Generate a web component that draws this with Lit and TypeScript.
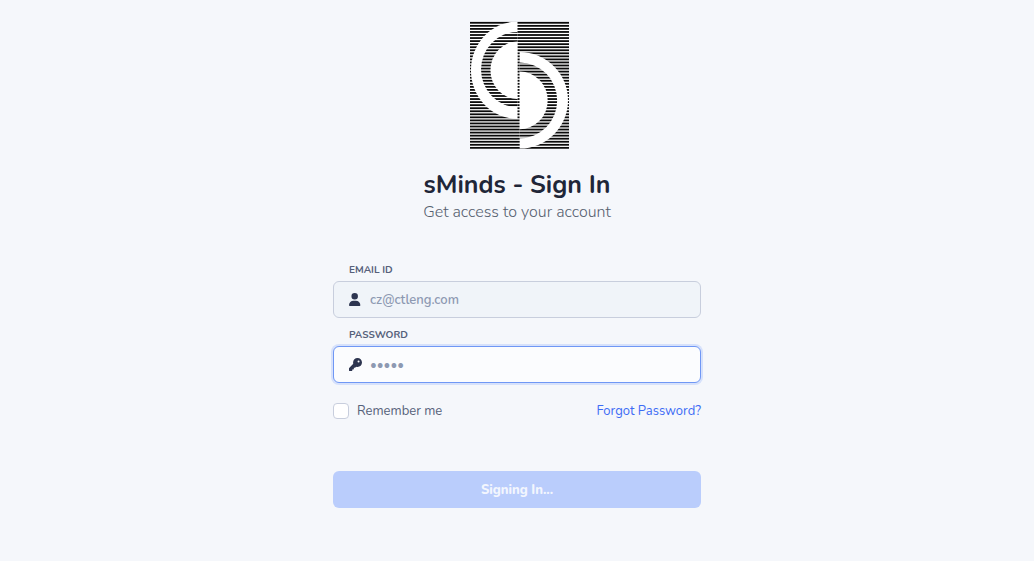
import { LitElement, html, css, svg } from "lit";
import { customElement } from "lit/decorators.js";

const STRIPES = Array.from({ length: 42 }, (_, i) => 0.9 + i * 3.05);

@customElement("brand-logo")
export class BrandLogo extends LitElement {
  static styles = css`
    :host { display: block; }
    svg { display: block; }
  `;

  render() {
    return html`
      <svg width="104" height="129" viewBox="-5 0 104 129" role="img" aria-label="sMinds">
        <defs>
          <mask id="m" maskUnits="userSpaceOnUse" x="0" y="0" width="99" height="129">
            <rect width="99" height="129" fill="#fff" />
            <path d="M47.500 .5A46.500 48.7 0 0 0 47.500 98Z" fill="#000" />
            <path d="M47.500 11A36.500 37.5 0 0 0 47.500 86Z" fill="#fff" />
            <path d="M47.500 20.5A27 28.7 0 0 0 47.500 78Z" fill="#000" />
            <path d="M49.700 31A48.3 48.3 0 0 1 49.700 127.6Z" fill="#000" />
            <path d="M49.700 41.5A37.500 37.9 0 0 1 49.700 117.3Z" fill="#fff" />
            <path d="M49.700 50.5A28 28.9 0 0 1 49.700 108.3Z" fill="#000" />
          </mask>
        </defs>
        <rect y="1" width="99" height="127" fill="#fff" />
        <g mask="url(#m)" fill="#0b0b0b">
          ${STRIPES.map((y) => svg`<rect x="0" y=${y} width="99" height="1.8" />`)}
        </g>
      </svg>
    `;
  }
}

@customElement("app-root")
export class AppRoot extends LitElement {
  static styles = css`
    :host {
      display: block;
      min-height: 100vh;
      box-sizing: border-box;
      padding: 21px 16px 32px;
      background: #f5f7fb;
      color: #1e293b;
      font-family: Nunito, "Open Sans", sans-serif;
      font-size: 13px;
      line-height: 20px;
    }
    * { box-sizing: border-box; }
    main {
      display: flex;
      flex-direction: column;
      align-items: center;
      max-width: 368px;
      margin: 0 auto;
    }
    h1 {
      margin: 20px 0 0;
      font-size: 25px;
      line-height: 30px;
      font-weight: 700;
      color: #1f2638;
    }
    .lead {
      margin: 0;
      font-size: 16px;
      line-height: 24px;
      font-weight: 350;
      color: #56606f;
    }
    form { width: 100%; margin-top: 38px; }
    .label {
      display: block;
      padding-left: 16px;
      font-size: 10px;
      line-height: 16px;
      font-weight: 700;
      color: #56617a;
    }
    .field {
      display: flex;
      align-items: center;
      gap: 8px;
      height: 37px;
      margin: 3px 0 9px;
      padding: 0 15px;
      border: 1px solid #c8cedd;
      border-radius: 6px;
      background: #f0f4f9;
    }
    .field.active {
      background: #fbfcfe;
      border-color: #6f97f5;
      box-shadow: 0 0 0 2px #d6e1fb;
    }
    .field svg { flex: none; fill: #2d3550; }
    .field input {
      flex: 1;
      min-width: 0;
      height: 20px;
      padding: 0;
      border: 0;
      outline: 0;
      background: none;
      font: inherit;
      font-weight: 600;
      color: #8d99b2;
    }
    .options {
      display: flex;
      align-items: center;
      justify-content: space-between;
      margin-top: 18px;
    }
    .remember {
      display: flex;
      align-items: center;
      gap: 8px;
      color: #56617a;
    }
    .remember input {
      appearance: none;
      width: 16px;
      height: 16px;
      margin: 0;
      border: 1px solid #c8cedd;
      border-radius: 4px;
      background: #fff;
    }
    .remember input:checked { background: #3f70f5; }
    a { color: #3d6cf5; text-decoration: none; }
    button {
      display: block;
      width: 100%;
      height: 37px;
      margin-top: 50px;
      padding: 0;
      border: 0;
      border-radius: 6px;
      background: #bacdfc;
      color: #f3f6fe;
      font: inherit;
      font-weight: 800;
    }
  `;

  render() {
    return html`
      <main>
        <brand-logo></brand-logo>
        <h1>sMinds - Sign In</h1>
        <p class="lead">Get access to your account</p>
        <form @submit=${(e: Event) => e.preventDefault()}>
          <label class="label" for="email">EMAIL ID</label>
          <div class="field">
            <svg width="13" height="13" viewBox="32 0 448 512" aria-hidden="true">
              <path d="M224 256A128 128 0 1 0 224 0a128 128 0 1 0 0 256zm-45.700 48C79.800 304 0 383.800 0 482.300C0 498.700 13.300 512 29.700 512H418.300c16.400 0 29.700-13.300 29.700-29.700C448 383.800 368.200 304 269.700 304H178.300z" />
            </svg>
            <input id="email" type="email" value="cz@ctleng.com" readonly />
          </div>
          <label class="label" for="password">PASSWORD</label>
          <div class="field active">
            <svg width="13" height="13" viewBox="0 0 512 512" aria-hidden="true">
              <path d="M336 352c97.200 0 176-78.800 176-176S433.200 0 336 0S160 78.800 160 176c0 18.700 2.900 36.800 8.300 53.700L7 391c-4.500 4.500-7 10.600-7 17v80c0 13.300 10.700 24 24 24h80c13.300 0 24-10.700 24-24V448h40c13.300 0 24-10.700 24-24V384h40c6.400 0 12.500-2.500 17-7l33.300-33.300c16.900 5.400 35 8.300 53.700 8.300zM376 96a40 40 0 1 1 0 80 40 40 0 1 1 0-80z" />
            </svg>
            <input id="password" type="password" value="12345" readonly />
          </div>
          <div class="options">
            <label class="remember"><input type="checkbox" />Remember me</label>
            <a href="#forgot">Forgot Password?</a>
          </div>
          <button type="submit">Signing In...</button>
        </form>
      </main>
    `;
  }
}
